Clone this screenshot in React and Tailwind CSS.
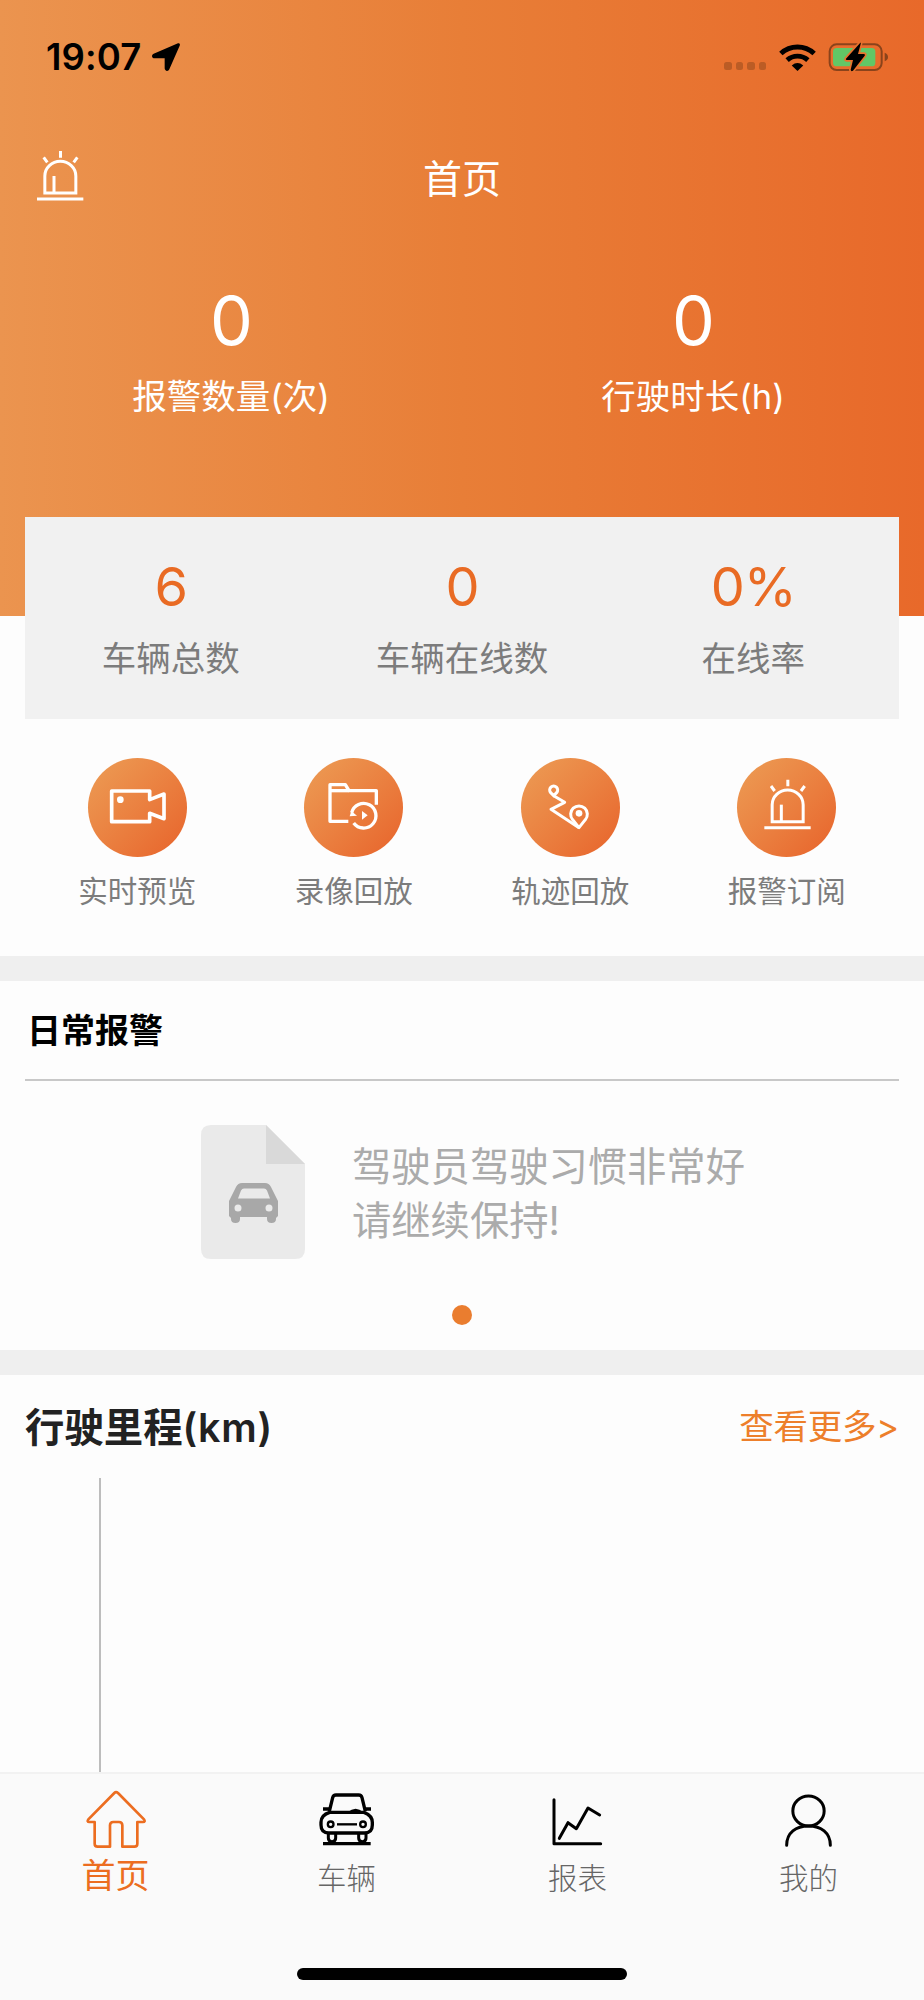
import React from 'react';

const tabs = [
  { label: '首页', icon: HomeIcon, active: true },
  { label: '车辆', icon: CarIcon },
  { label: '报表', icon: ChartIcon },
  { label: '我的', icon: UserIcon },
];

const overview = [
  { value: '0', label: '报警数量(次)' },
  { value: '0', label: '行驶时长(h)' },
];

const vehicleStats = [
  { value: '6', label: '车辆总数' },
  { value: '0', label: '车辆在线数' },
  { value: '0%', label: '在线率' },
];

const shortcuts = [
  { label: '实时预览', glyph: <CameraGlyph /> },
  { label: '录像回放', glyph: <PlaybackGlyph /> },
  { label: '轨迹回放', glyph: <TrackGlyph /> },
  { label: '报警订阅', glyph: <g transform="translate(82 65)"><SirenShape /></g> },
];

function SirenShape() {
  return (
    <g fill="none" stroke="#fff" strokeWidth="9">
      <path d="M23.500 126V75a46.500 44 0 0 1 93 0v51z" />
      <path d="M51 75v51" />
      <path d="M0 144h139" />
      <path d="M70.500 0v20M20 19l11 15M121 19l-11 15" />
    </g>
  );
}

function CameraGlyph() {
  return (
    <g fill="none" stroke="#fff" strokeWidth="11" strokeLinejoin="round">
      <path d="M185 125V99H71v92h114v-25l43 16v-74z" />
      <circle cx="97" cy="125" r="10" fill="#fff" stroke="none" />
    </g>
  );
}

function PlaybackGlyph() {
  return (
    <g fill="none" stroke="#fff" strokeWidth="10" strokeLinejoin="round">
      <path d="M133 190H78V80h46l11 18h82v42" />
      <path d="M78 98h57" />
      <path d="M143 164a37 37 0 1 1 6 31" />
      <path d="M137 175l5-16 17 14z" fill="#fff" stroke="none" />
      <path d="M174 159l17 13-17 13z" fill="#fff" stroke="none" />
    </g>
  );
}

function TrackGlyph() {
  return (
    <g fill="none" stroke="#fff" strokeWidth="9" strokeLinejoin="round">
      <path d="M98 113l-9-9a12 12 0 1 1 18 0z" />
      <path d="M98 113l33 20-41 21 84 55" />
      <path d="M174 209l-19-24a25 25 0 1 1 38 0z" />
      <circle cx="174" cy="166" r="10" fill="#fff" stroke="none" />
    </g>
  );
}

function HomeIcon() {
  return (
    <svg className="mt-[16px] h-[60px] w-[62px]" viewBox="254 118 186 180" fill="none" stroke="#ec6d20" strokeWidth="8" strokeLinejoin="round">
      <path d="M342 127L264 206q-5 8 3 8h16v65q0 9 9 9h37v-64q0-10 10-10h17q10 0 10 10v64h36q9 0 9-9v-65h17q8 0 3-8L353 127q-6-5-11 0z" />
    </svg>
  );
}

function CarIcon() {
  return (
    <svg className="mt-[16px] h-[60px] w-[62px]" viewBox="947 118 186 180" fill="none" stroke="#000" strokeWidth="10">
      <path d="M987 182l10-41q2-8 10-8h68q8 0 10 8l10 41" />
      <path d="M968 175h20M1092 175h20" />
      <path d="M988 185h103q25 10 25 30v8q0 24-24 24H986q-24 0-24-24v-8q0-22 26-30z" />
      <path d="M1042 185q24-22 47 0z" fill="#000" stroke="none" />
      <circle cx="991" cy="221" r="8.500" strokeWidth="7" />
      <circle cx="1088" cy="221" r="8.500" strokeWidth="7" />
      <path d="M1010 221h60" strokeWidth="7" />
      <path d="M984 248v14q0 11 11 11t11-11v-14M1075 248v14q0 11 11 11t11-11v-14" strokeWidth="9" />
      <path d="M968 279h143" />
    </svg>
  );
}

function ChartIcon() {
  return (
    <svg className="mt-[16px] h-[60px] w-[62px]" viewBox="256 118 186 180" fill="none" stroke="#000" strokeWidth="9" strokeLinecap="round" strokeLinejoin="round">
      <path d="M277 147v132h140" />
      <path d="M293 263l26-47 25 18 35-62 35 21" />
    </svg>
  );
}

function UserIcon() {
  return (
    <svg className="mt-[16px] h-[60px] w-[62px]" viewBox="948 118 186 180" fill="none" stroke="#000" strokeWidth="9" strokeLinecap="round">
      <ellipse cx="1039.500" cy="181" rx="47" ry="45" />
      <path d="M974 284c0-38 28-58 65.500-58s65.500 20 65.500 58" />
    </svg>
  );
}

const StatusBar = () => (
  <div className="flex h-[114px] items-center pl-[46px] pr-[35px]">
    <span className="w-[106px] text-[36.500px] leading-none font-semibold tracking-[0.1px] text-black">19:07</span>
    <svg className="size-7" viewBox="0 0 84 84">
      <path d="M78 1c5-1 7 3 5 7L52 79c-4 8-14 5-14-3V46H8c-9 0-11-10-3-14z" />
    </svg>
    <div className="ml-auto flex items-center">
      <div className="mt-[18px] flex gap-[4px]">
        {[0, 1, 2, 3].map((i) => (
          <span key={i} className="size-[7.500px] rounded-[2.500px] bg-[#bb5c25]" />
        ))}
      </div>
      <svg className="ml-[13px] h-[27px] w-[37px]" viewBox="0 0 111 82">
        <g fill="none" stroke="#000" strokeWidth="15">
          <path d="M5 29a74 74 0 0 1 101 0" />
          <path d="M24 49a47 47 0 0 1 63 0" />
        </g>
        <path d="M38 65q17.500-15 35 0L55.500 82z" />
      </svg>
      <svg className="ml-[12px] h-[30px] w-[61px]" viewBox="0 0 183 90">
        <rect x="5" y="7" width="156" height="77" rx="21" fill="none" stroke="#8a431b" strokeWidth="6" />
        <path d="M170 32q10 4 10 13t-10 13z" fill="#8a431b" />
        <rect x="15" y="18" width="127" height="55" rx="11" fill="#62c766" />
        <path d="M97 2L54 50q-2 4 3 4h18L68 83q1 7 7 3l35-45q3-5-3-5H90l8-30q1-6-1-4z" fill="#000" stroke="#e8722d" strokeWidth="10" paintOrder="stroke" />
      </svg>
    </div>
  </div>
);

const SectionGap = () => <div className="h-[25px] bg-[#efefef]" />;

export default function App() {
  return (
    <div className="flex h-[2000px] w-[924px] flex-col overflow-hidden bg-[#fdfdfd] font-['Inter','Noto_Sans_CJK_SC',sans-serif]">
      <header className="h-[616px] shrink-0 bg-linear-to-r from-[#eb944f] via-[#e87e37] to-[#e8692a] text-white">
        <StatusBar />
        <div className="grid h-[130px] grid-cols-3 items-center px-[37px]">
          <svg className="-mt-[7px] h-[50px] w-[47px]" viewBox="0 0 141 150">
            <SirenShape />
          </svg>
          <h1 className="-mt-px text-center text-[39px] leading-none">首页</h1>
        </div>
        <div className="grid grid-cols-2 pt-[34px] text-center">
          {overview.map((item) => (
            <div key={item.label}>
              <div className="text-[68px] leading-[84px] tracking-[-1px]">{item.value}</div>
              <div className="mt-[10px] text-[34.500px] leading-[50px]">{item.label}</div>
            </div>
          ))}
        </div>
      </header>

      <section className="relative mx-[25px] -mt-[99px] grid h-[202px] shrink-0 grid-cols-3 bg-[#f1f1f1] pt-[36px] text-center">
        {vehicleStats.map((item) => (
          <div key={item.label}>
            <div className="text-[54px] leading-[68px] tracking-[-1px] text-[#e96b24]">{item.value}</div>
            <div className="mt-[13px] text-[34.500px] leading-[50px] text-[#7c7c7c]">{item.label}</div>
          </div>
        ))}
      </section>

      <section className="grid h-[237px] shrink-0 grid-cols-4 px-[29px] pt-[39px]">
        {shortcuts.map((item) => (
          <div key={item.label} className="flex flex-col items-center">
            <div className="size-[99px] rounded-full bg-linear-to-br from-[#ec9d55] to-[#e7622a]">
              <svg className="size-full" viewBox="0 0 297 297">{item.glyph}</svg>
            </div>
            <span className="mt-[14px] text-[29.500px] leading-[40px] text-[#7c7c7c]">{item.label}</span>
          </div>
        ))}
      </section>

      <SectionGap />

      <section className="h-[369px] shrink-0 px-[25px]">
        <h2 className="flex h-[100px] items-center border-b-2 border-[#c8c8c8] pl-[2px] text-[34px] font-bold text-black">日常报警</h2>
        <div className="flex pt-[44px] pl-[176px]">
          <svg className="h-[134px] w-[104px]" viewBox="0 0 104 134">
            <path d="M10 0h55l39 39v85q0 10-10 10H10q-10 0-10-10V10Q0 0 10 0z" fill="#eaeaea" />
            <path d="M65 0l39 39H65z" fill="#d9d9d9" />
            <path
              d="M41 58h23q4 0 6 4l7 14v15l-2 2v1q0 4-4.500 4T66 94v-2H39v2q0 4-4.500 4T30 94v-1l-2-2V76l7-14q2-4 6-4zM43 63.500q-2 0-3 2l-3 8h32l-3-8q-1-2-3-2zM37 79.500a3.500 3.500 0 1 0 0 7 3.500 3.500 0 1 0 0-7M68 79.500a3.500 3.500 0 1 0 0 7 3.500 3.500 0 1 0 0-7"
              fill="#a8a8a8"
              fillRule="evenodd"
            />
          </svg>
          <p className="mt-[15px] ml-[47px] text-[39.300px] leading-[54px] text-[#ababab]">
            驾驶员驾驶习惯非常好
            <br />
            请继续保持!
          </p>
        </div>
        <div className="mx-auto mt-[46px] size-5 rounded-full bg-[#ea7d2f]" />
      </section>

      <SectionGap />

      <section className="flex min-h-0 flex-1 flex-col px-[25px]">
        <div className="flex h-[103px] items-center justify-between">
          <h2 className="mt-[5px] text-[39.400px] font-bold text-[#222]">
            行驶里程<span className="font-semibold tracking-[0.8px]">(km)</span>
          </h2>
          <a className="mt-px text-[34.500px] tracking-[-0.2px] text-[#ed7f2b]">查看更多&gt;</a>
        </div>
        {/* y axis of the mileage chart */}
        <div className="ml-[74px] w-[3px] flex-1 border-l-2 border-[#bdbdbd]" />
      </section>

      <nav className="relative grid h-[228px] shrink-0 grid-cols-4 border-t-2 border-[#f2f2f2] bg-[#fafafa]">
        {tabs.map(({ label, icon: Icon, active }) => (
          <div key={label} className="flex flex-col items-center">
            <Icon />
            {active ? (
              <span className="mt-[4px] text-[34px] leading-[44px] text-[#ec6d20]">{label}</span>
            ) : (
              <span className="mt-[6px] text-[29.500px] leading-[44px] font-light text-[#666]">{label}</span>
            )}
          </div>
        ))}
        <div className="absolute bottom-[20px] left-[297px] h-3 w-[330px] rounded-full bg-black" />
      </nav>
    </div>
  );
}
